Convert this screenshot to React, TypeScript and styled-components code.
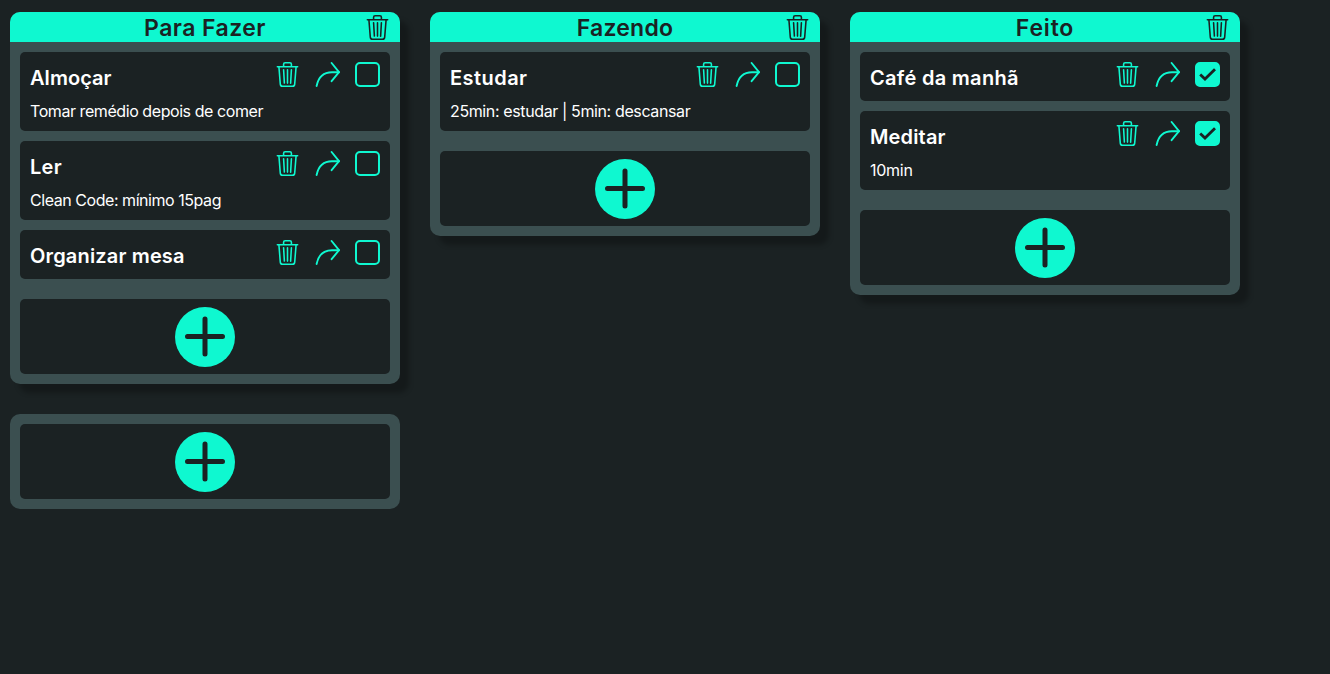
import React from "react";
import styled, { createGlobalStyle } from "styled-components";
import { BsTrash3 } from "react-icons/bs";

const accent = "#0ff8d0";
const dark = "#1b2223";
const slate = "#3b4f50";

const GlobalStyle = createGlobalStyle`
  * { box-sizing: border-box; margin: 0; padding: 0; }
  body {
    background: ${dark};
    font-family: Inter, Roboto, sans-serif;
    color: #fff;
  }
`;

const Board = styled.main`
  display: flex;
  flex-wrap: wrap;
  align-items: flex-start;
  gap: 30px;
  padding: 12px 10px;
`;

const Column = styled.section<{ $raised?: boolean }>`
  width: 390px;
  border-radius: 10px;
  background: ${slate};
  overflow: hidden;
  box-shadow: ${(p) => (p.$raised ? "9px 9px 5px rgba(0, 0, 0, 0.25)" : "none")};
`;

const ColumnHeader = styled.header`
  display: grid;
  grid-template-columns: 35px 1fr 35px;
  align-items: center;
  height: 30px;
  background: ${accent};
  color: ${dark};
`;

const ColumnTitle = styled.h1<{ $spacing: number }>`
  grid-column: 2;
  text-align: center;
  font-size: 23px;
  font-weight: 600;
  line-height: 30px;
  padding-top: 1px;
  letter-spacing: ${(p) => p.$spacing}px;
`;

const ColumnBody = styled.div`
  display: flex;
  flex-direction: column;
  gap: 10px;
  padding: 10px;
`;

const Card = styled.article`
  border-radius: 5px;
  background: ${dark};
  padding: 10px;
`;

const CardTop = styled.div`
  display: flex;
  justify-content: space-between;
  height: 29px;
`;

const CardTitle = styled.h2<{ $spacing: number }>`
  font-size: 20px;
  font-weight: 600;
  line-height: 33px;
  white-space: nowrap;
  letter-spacing: ${(p) => p.$spacing}px;
`;

const CardText = styled.p<{ $spacing: number }>`
  margin-top: 10px;
  font-size: 16px;
  line-height: 20px;
  white-space: nowrap;
  letter-spacing: ${(p) => p.$spacing}px;
`;

const Actions = styled.div`
  display: flex;
  gap: 15px;
  color: ${accent};
`;

const IconButton = styled.button`
  display: block;
  width: 25px;
  height: 25px;
  border: 0;
  background: none;
  color: inherit;
  svg { display: block; }
`;

const CheckBox = styled.button<{ $checked: boolean }>`
  width: 25px;
  height: 25px;
  border: 2px solid ${accent};
  border-radius: 5px;
  background: ${(p) => (p.$checked ? accent : "transparent")};
  color: ${dark};
  svg { display: block; }
`;

const AddPanel = styled.div<{ $spaced?: boolean }>`
  display: flex;
  justify-content: center;
  height: 75px;
  margin-top: ${(p) => (p.$spaced ? 10 : 0)}px;
  padding-top: 8px;
  border-radius: 5px;
  background: ${dark};
`;

const AddButton = styled.button`
  width: 60px;
  height: 60px;
  border: 0;
  border-radius: 50%;
  background: ${accent};
  svg { display: block; }
`;

const ShareIcon = () => (
  <svg width="25" height="25" viewBox="0 0 25 25" fill="none" stroke="currentColor" strokeWidth="1.9" strokeLinecap="round" strokeLinejoin="round">
    <path d="M1.6 24C3.4 15 9 10.2 17 10.2H24" />
    <path d="M16.6 1L24 10.2L16.6 19.2" />
  </svg>
);

const CheckIcon = () => (
  <svg width="21" height="21" viewBox="2 2 21 21" fill="none" stroke="currentColor" strokeWidth="2.8">
    <path d="M5.2 12.4L10 17L20 7.2" />
  </svg>
);

const PlusIcon = () => (
  <svg width="60" height="60" viewBox="0 0 60 60" fill="none" stroke={dark} strokeWidth="5" strokeLinecap="round">
    <path d="M12.5 29.5H47.5M30 12V47" />
  </svg>
);

const Adder = ({ spaced }: { spaced?: boolean }) => (
  <AddPanel $spaced={spaced}>
    <AddButton aria-label="Adicionar">
      <PlusIcon />
    </AddButton>
  </AddPanel>
);

interface Task {
  title: string;
  titleSpacing: number;
  text?: string;
  textSpacing?: number;
  done?: boolean;
}

interface TaskList {
  title: string;
  spacing: number;
  tasks: Task[];
}

const lists: TaskList[] = [
  {
    title: "Para Fazer",
    spacing: 0.45,
    tasks: [
      { title: "Almoçar", titleSpacing: 0.05, text: "Tomar remédio depois de comer", textSpacing: -0.43 },
      { title: "Ler", titleSpacing: 0.3, text: "Clean Code: mínimo 15pag", textSpacing: -0.45 },
      { title: "Organizar mesa", titleSpacing: 0.16 },
    ],
  },
  {
    title: "Fazendo",
    spacing: 0.2,
    tasks: [{ title: "Estudar", titleSpacing: 0.45, text: "25min: estudar | 5min: descansar", textSpacing: -0.38 }],
  },
  {
    title: "Feito",
    spacing: 0.8,
    tasks: [
      { title: "Café da manhã", titleSpacing: 0.3, done: true },
      { title: "Meditar", titleSpacing: 0.15, text: "10min", textSpacing: -0.25, done: true },
    ],
  },
];

const TaskCard = ({ task }: { task: Task }) => (
  <Card>
    <CardTop>
      <CardTitle $spacing={task.titleSpacing}>{task.title}</CardTitle>
      <Actions>
        <IconButton aria-label="Excluir">
          <BsTrash3 size={25} />
        </IconButton>
        <IconButton aria-label="Mover">
          <ShareIcon />
        </IconButton>
        <CheckBox $checked={!!task.done} aria-label="Concluir">
          {task.done && <CheckIcon />}
        </CheckBox>
      </Actions>
    </CardTop>
    {task.text && <CardText $spacing={task.textSpacing ?? 0}>{task.text}</CardText>}
  </Card>
);

export default function App() {
  return (
    <>
      <GlobalStyle />
      <Board>
        {lists.map((list) => (
          <Column key={list.title} $raised>
            <ColumnHeader>
              <ColumnTitle $spacing={list.spacing}>{list.title}</ColumnTitle>
              <IconButton aria-label="Excluir lista">
                <BsTrash3 size={25} />
              </IconButton>
            </ColumnHeader>
            <ColumnBody>
              {list.tasks.map((task) => (
                <TaskCard key={task.title} task={task} />
              ))}
              <Adder spaced />
            </ColumnBody>
          </Column>
        ))}
        <Column>
          <ColumnBody>
            <Adder />
          </ColumnBody>
        </Column>
      </Board>
    </>
  );
}
